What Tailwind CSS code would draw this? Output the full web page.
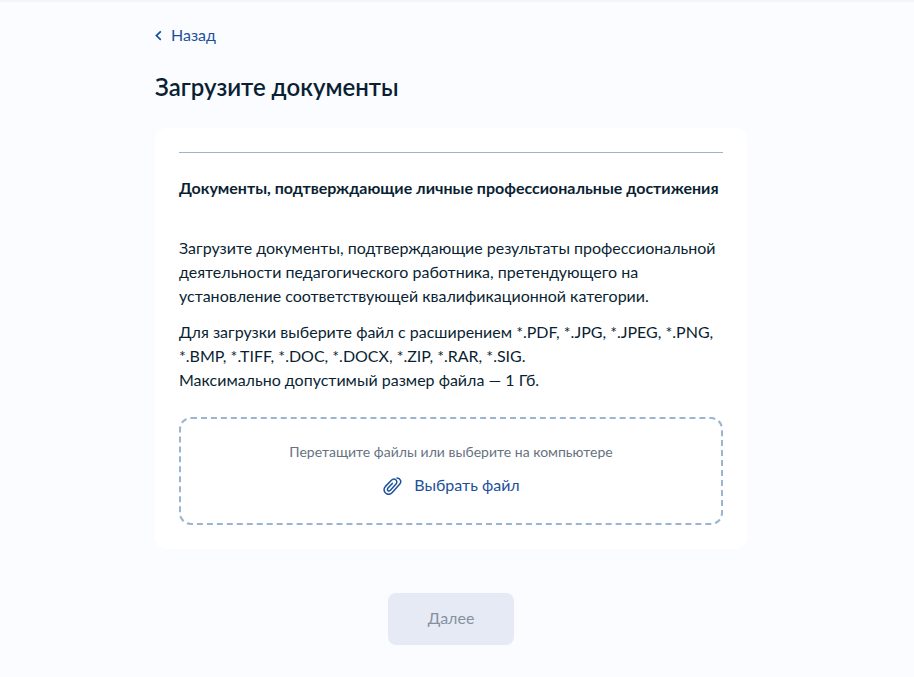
<!DOCTYPE html>
<html lang="ru">
<head>
<meta charset="utf-8">
<meta name="viewport" content="width=device-width, initial-scale=1">
<title>Загрузите документы</title>
<script src="https://cdn.jsdelivr.net/npm/@tailwindcss/browser@4"></script>
</head>
<body class="min-h-screen bg-[#fafcff] font-[Lato,sans-serif] text-[#0b1f33]">
<div class="h-0.5 bg-[#f3f5f9]"></div>
<main class="mx-auto max-w-[604px] pt-[21px] pr-3 pb-8">
  <a href="#" class="flex w-fit items-center gap-2 text-base leading-6 text-[#1d509b]">
    <svg class="h-3 w-2" viewBox="0 0 8 12" fill="none" stroke="currentColor" stroke-width="1.7" aria-hidden="true"><path d="M5.8 2.4 1.4 6.6l4.4 4.2"/></svg>
    Назад
  </a>
  <h1 class="mt-6 text-2xl leading-8 font-semibold">Загрузите документы</h1>
  <section class="mt-[25px] rounded-xl bg-white p-6">
    <hr class="border-[#9bb5d0]">
    <h2 class="mt-[23px] text-base leading-6 font-bold">Документы, подтверждающие личные профессиональные достижения</h2>
    <p class="mt-9 text-base leading-6">Загрузите документы, подтверждающие результаты профессиональной деятельности педагогического работника, претендующего на установление соответствующей квалификационной категории.</p>
    <p class="mt-3 text-base leading-6">Для загрузки выберите файл с расширением *.PDF, *.JPG, *.JPEG, *.PNG, *.BMP, *.TIFF, *.DOC, *.DOCX, *.ZIP, *.RAR, *.SIG.<br>Максимально допустимый размер файла — 1 Гб.</p>
    <div class="mt-[25px] flex flex-col items-center rounded-xl border-2 border-dashed border-[#9bb5d0] pt-[23px] pb-[26px]">
      <p class="text-sm leading-5 text-[#66727f]">Перетащите файлы или выберите на компьютере</p>
      <button type="button" class="mt-[11px] flex items-center gap-3 text-base leading-6 text-[#1d509b]">
        <svg class="h-5 w-5" viewBox="0 0 20 20" fill="none" stroke="currentColor" stroke-width="1.5" stroke-linecap="round" stroke-linejoin="round" aria-hidden="true"><path d="M15 3c3.4.2 4.900 3.700 2.600 6.300l-7.300 8.100c-1.900 2.100-4.700 2.300-6.700.6-2-1.800-2.100-4.500-.2-6.600L9.400 5.300c1.300-1.400 3.100-1.600 4.400-.5s1.400 2.800.2 4.200l-5.600 6.200c-.8.9-1.800 1-2.500.4s-.7-1.600.1-2.500l4.300-4.700"/></svg>
        Выбрать файл
      </button>
    </div>
  </section>
  <div class="mt-11 flex justify-center">
    <button type="button" disabled class="rounded-lg bg-[#e6eaf4] px-10 pt-[13px] pb-[15px] text-base leading-6 text-[#8591a0]">Далее</button>
  </div>
</main>
</body>
</html>
